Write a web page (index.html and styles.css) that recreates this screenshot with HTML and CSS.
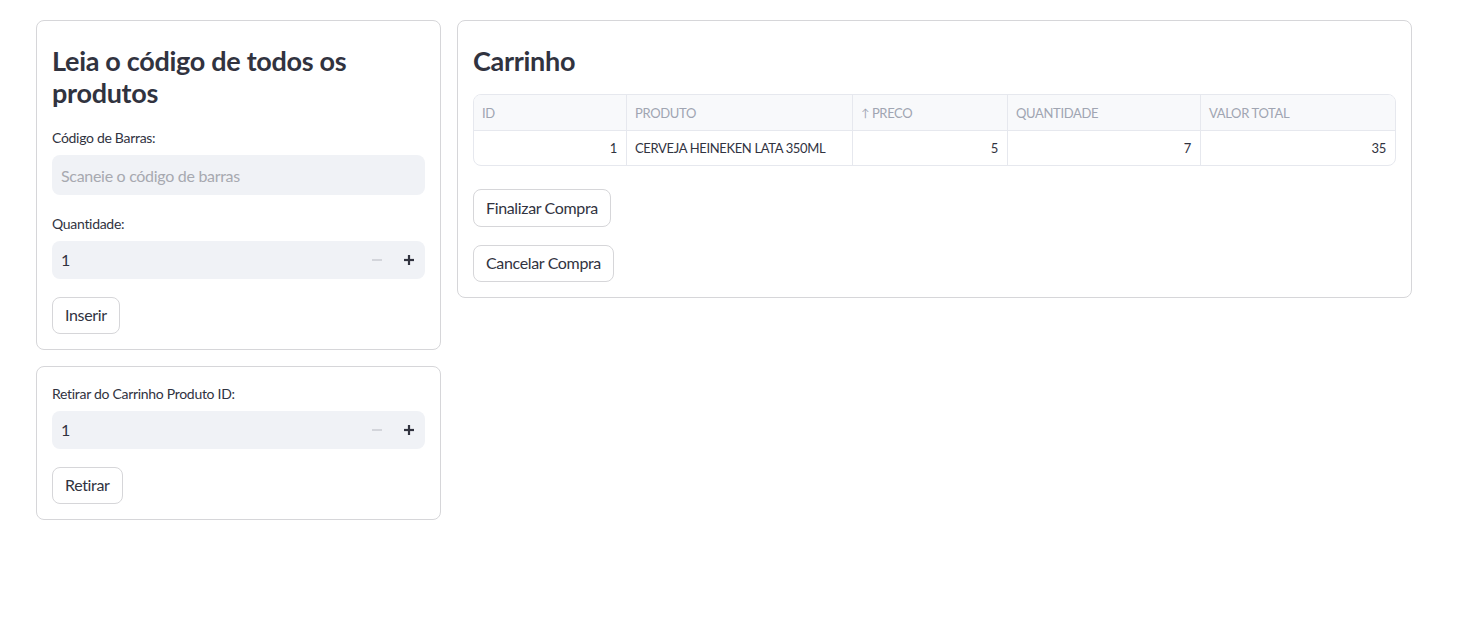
FILE: index.html
```html
<!DOCTYPE html>
<html lang="pt">
<head>
<meta charset="utf-8">
<title>Caixa</title>
<link rel="stylesheet" href="styles.css">
</head>
<body>
<main class="page">
  <div class="col col-left">
    <section class="card">
      <h3 class="title">Leia o código de todos os produtos</h3>
      <div class="field">
        <label class="label">Código de Barras:</label>
        <div class="text-input"><span class="placeholder">Scaneie o código de barras</span></div>
      </div>
      <div class="field">
        <label class="label">Quantidade:</label>
        <div class="num-input">
          <span class="num-value">1</span>
          <span class="step step-minus"><svg width="10" height="10" viewBox="0 0 10 10"><rect x="0" y="4" width="10" height="2" fill="#d3d5db"/></svg></span>
          <span class="step step-plus"><svg width="10" height="10" viewBox="0 0 10 10"><rect x="0" y="3.9" width="10" height="2.2" fill="#31333f"/><rect x="3.9" y="0" width="2.2" height="10" fill="#31333f"/></svg></span>
        </div>
      </div>
      <div><button class="btn">Inserir</button></div>
    </section>
    <section class="card">
      <div class="field">
        <label class="label">Retirar do Carrinho Produto ID:</label>
        <div class="num-input">
          <span class="num-value">1</span>
          <span class="step step-minus"><svg width="10" height="10" viewBox="0 0 10 10"><rect x="0" y="4" width="10" height="2" fill="#d3d5db"/></svg></span>
          <span class="step step-plus"><svg width="10" height="10" viewBox="0 0 10 10"><rect x="0" y="3.9" width="10" height="2.2" fill="#31333f"/><rect x="3.9" y="0" width="2.2" height="10" fill="#31333f"/></svg></span>
        </div>
      </div>
      <div><button class="btn">Retirar</button></div>
    </section>
  </div>
  <div class="col col-right">
    <section class="card">
      <h3 class="title">Carrinho</h3>
      <div class="grid-table">
        <div class="th">ID</div>
        <div class="th">PRODUTO</div>
        <div class="th"><span class="arrow">↑</span>PRECO</div>
        <div class="th">QUANTIDADE</div>
        <div class="th th-last">VALOR TOTAL</div>
        <div class="td num">1</div>
        <div class="td">CERVEJA HEINEKEN LATA 350ML</div>
        <div class="td num">5</div>
        <div class="td num">7</div>
        <div class="td num td-last">35</div>
      </div>
      <div class="after-table"><button class="btn">Finalizar Compra</button></div>
      <div><button class="btn">Cancelar Compra</button></div>
    </section>
  </div>
</main>
</body>
</html>
```
FILE: styles.css
```css
* { box-sizing: border-box; }
html, body { margin: 0; padding: 0; background: #fff; }
body {
  font-family: "Lato", "Liberation Sans", sans-serif;
  color: #31333f;
}
.page {
  display: flex;
  align-items: flex-start;
  gap: 16px;
  padding: 20px 0 0 36px;
}
.col { display: flex; flex-direction: column; gap: 16px; }
.col-left { width: 405px; }
.col-right { width: 955px; }
.card {
  border: 1px solid #d6d6d9;
  border-radius: 8px;
  padding: 16px 15px 15px 15px;
  display: flex;
  flex-direction: column;
  gap: 18px;
}
.title {
  margin: 0;
  padding: 8px 0 0;
  font-size: 27px;
  line-height: 32px;
  font-weight: 700;
  letter-spacing: -0.3px;
  color: #31333f;
}
.field { display: flex; flex-direction: column; }
.label {
  font-size: 14px;
  line-height: 22px;
  height: 28px;
  letter-spacing: -0.3px;
  color: #31333f;
}
.text-input {
  height: 40px;
  background: #f0f2f6;
  border-radius: 8px;
  display: flex;
  align-items: center;
  padding-left: 9px;
  font-size: 16px;
  letter-spacing: -0.3px;
}
.placeholder { color: #a7a9b0; }
.num-input {
  height: 37.5px;
  background: #f0f2f6;
  border-radius: 8px;
  display: flex;
  align-items: center;
  padding-left: 9px;
  font-size: 16px;
}
.num-value { flex: 1; }
.step {
  width: 32px;
  height: 37px;
  display: flex;
  align-items: center;
  justify-content: center;
}
.btn {
  font-family: inherit;
  font-size: 16px;
  letter-spacing: -0.35px;
  color: #31333f;
  background: #fff;
  border: 1px solid #d6d6d9;
  border-radius: 8px;
  height: 37.5px;
  padding: 0 12px;
  line-height: 1;
}
.grid-table {
  display: grid;
  grid-template-columns: 153px 226px 155px 193px 1fr;
  border: 1px solid #e6e8ee;
  border-radius: 8px;
  overflow: hidden;
  font-size: 13px;
  letter-spacing: -0.35px;
  margin-top: -1px;
}
.th {
  height: 36px;
  background: #f8f9fb;
  color: #a0a5b2;
  display: flex;
  align-items: center;
  padding: 0 8px;
  border-right: 1px solid #e6e8ee;
  border-bottom: 1px solid #e6e8ee;
}
.arrow { font-size: 11px; margin-right: 3px; }
.td {
  height: 34px;
  display: flex;
  align-items: center;
  padding: 0 8px;
  border-right: 1px solid #e6e8ee;
  color: #31333f;
}
.num { justify-content: flex-end; padding-right: 9px; }
.th-last, .td-last { border-right: none; }
.after-table { margin-top: 5px; }
```
